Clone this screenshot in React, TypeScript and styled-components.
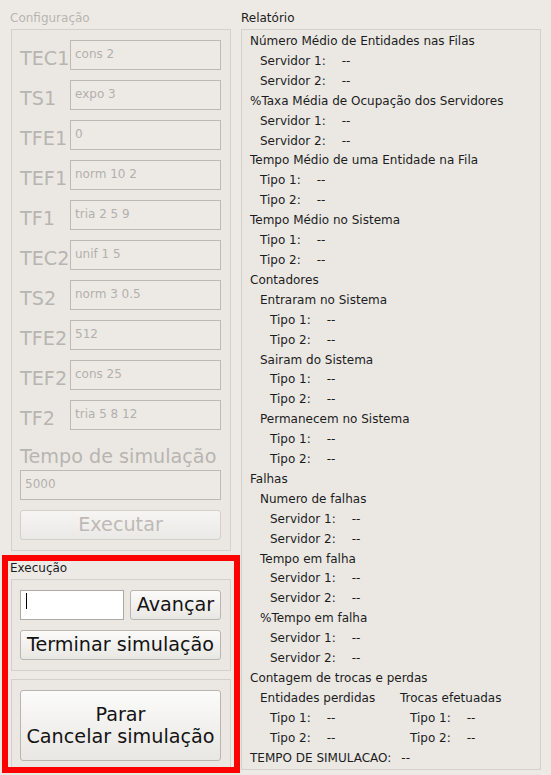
import React from "react";
import styled, { createGlobalStyle } from "styled-components";

const GlobalStyle = createGlobalStyle`
  html, body {
    margin: 0;
    padding: 0;
    background: #edeae6;
    font-family: "DejaVu Sans", "Liberation Sans", sans-serif;
  }
`;

const Page = styled.div`
  display: flex;
  align-items: flex-start;
  width: 551px;
  height: 775px;
  background: #edeae6;
  overflow: hidden;
`;

const LeftCol = styled.div`
  display: flex;
  flex-direction: column;
  width: 240px;
`;

const RightCol = styled.div`
  display: flex;
  flex-direction: column;
  padding: 11px 0 0 1px;
`;

const GroupTitle = styled.div<{ $disabled?: boolean }>`
  flex-shrink: 0;
  font-size: 12px;
  line-height: 14px;
  color: ${(p) => (p.$disabled ? "#b8b5b1" : "#1c1c1c")};
`;

const Frame = styled.div`
  box-sizing: border-box;
  flex-shrink: 0;
  border: 1px solid #d4d1cc;
  background: #ebe8e4;
`;

const ConfigSection = styled.div`
  display: flex;
  flex-direction: column;
  padding: 11px 0 0 10px;
`;

const ConfigFrame = styled(Frame)`
  display: flex;
  flex-direction: column;
  gap: 10px;
  margin: 4px 0 0 1px;
  width: 220px;
  height: 522px;
  padding: 10px 8px 0 8px;
`;

const ParamGrid = styled.div`
  display: grid;
  grid-template-columns: 50px 151px;
  grid-auto-rows: 30px;
  row-gap: 10px;
`;

const BigLabel = styled.div`
  font-size: 19.2px;
  line-height: 37px;
  height: 30px;
  color: #b8b5b1;
  white-space: nowrap;
`;

const SimLabel = styled(BigLabel)`
  line-height: 34px;
`;

const Field = styled.input`
  box-sizing: border-box;
  width: ${(p) => p.width ?? 151}px;
  height: 30px;
  margin: 0;
  padding: 6px 4px 8px 4px;
  border: 1px solid #bdbab6;
  border-radius: 0;
  background: #edeae6;
  color: #b3b0ac;
  font-family: "DejaVu Sans", "Liberation Sans", sans-serif;
  font-size: 12px;
  line-height: 14px;
  outline: none;
`;

const Button = styled.button<{ $disabled?: boolean; $w?: number; $h?: number }>`
  box-sizing: border-box;
  flex-shrink: 0;
  width: ${(p) => p.$w ?? 201}px;
  height: ${(p) => p.$h ?? 30}px;
  margin: 0;
  padding: 0;
  border: 1px solid ${(p) => (p.$disabled ? "#d3d0cb" : "#b9b6b1")};
  border-radius: 3px;
  background: ${(p) =>
    p.$disabled
      ? "linear-gradient(#f6f5f3, #ebe9e6)"
      : "linear-gradient(#fbfbfa, #e9e7e3)"};
  color: ${(p) => (p.$disabled ? "#bdbab6" : "#141414")};
  font-family: "DejaVu Sans", "Liberation Sans", sans-serif;
  font-size: 19.2px;
  line-height: 22px;
  text-align: center;
  white-space: nowrap;
`;

const ExecBox = styled.div`
  box-sizing: border-box;
  display: flex;
  flex-direction: column;
  margin: 4px 0 0 2px;
  width: 238px;
  height: 218px;
  border: 6px solid #ff0000;
  padding-left: 2px;
  overflow: hidden;
`;

const ExecFrame = styled(Frame)<{ $h: number }>`
  display: flex;
  flex-direction: column;
  gap: 10px;
  width: 220px;
  height: ${(p) => p.$h}px;
  margin: 4px 0 0 1px;
  padding: 10px 8px 0 8px;
`;

const ExecFrameNext = styled(ExecFrame)`
  margin-top: 8px;
`;

const EntryRow = styled.div`
  display: flex;
  gap: 6px;
`;

const Entry = styled.div`
  box-sizing: border-box;
  display: flex;
  align-items: flex-start;
  width: 104px;
  height: 30px;
  padding: 2px 0 0 5px;
  border: 1px solid #aeaba6;
  background: #ffffff;
`;

const Caret = styled.span`
  width: 1px;
  height: 16px;
  background: #000000;
`;

const ReportFrame = styled(Frame)`
  display: flex;
  flex-direction: column;
  margin-top: 4px;
  width: 300px;
  height: 741px;
  padding: 2px 0 0 8px;
`;

const Line = styled.div<{ $indent: number }>`
  display: flex;
  gap: 16px;
  height: 19.92px;
  padding-left: ${(p) => p.$indent * 10}px;
  font-size: 12px;
  line-height: 19.92px;
  color: #1c1c1c;
  white-space: nowrap;
`;

const Pair = styled.div`
  display: grid;
  grid-template-columns: 150px 140px;
`;

const FinalLine = styled(Line)`
  gap: 10px;
`;

type Item = { text: string; indent: number; value?: boolean };

const params = [
  ["TEC1", "cons 2"],
  ["TS1", "expo 3"],
  ["TFE1", "0"],
  ["TEF1", "norm 10 2"],
  ["TF1", "tria 2 5 9"],
  ["TEC2", "unif 1 5"],
  ["TS2", "norm 3 0.5"],
  ["TFE2", "512"],
  ["TEF2", "cons 25"],
  ["TF2", "tria 5 8 12"],
];

const srv = (indent: number): Item[] => [
  { text: "Servidor 1:", indent, value: true },
  { text: "Servidor 2:", indent, value: true },
];
const tipo = (indent: number): Item[] => [
  { text: "Tipo 1:", indent, value: true },
  { text: "Tipo 2:", indent, value: true },
];

const report: Item[] = [
  { text: "Número Médio de Entidades nas Filas", indent: 0 },
  ...srv(1),
  { text: "%Taxa Média de Ocupação dos Servidores", indent: 0 },
  ...srv(1),
  { text: "Tempo Médio de uma Entidade na Fila", indent: 0 },
  ...tipo(1),
  { text: "Tempo Médio no Sistema", indent: 0 },
  ...tipo(1),
  { text: "Contadores", indent: 0 },
  { text: "Entraram no Sistema", indent: 1 },
  ...tipo(2),
  { text: "Sairam do Sistema", indent: 1 },
  ...tipo(2),
  { text: "Permanecem no Sistema", indent: 1 },
  ...tipo(2),
  { text: "Falhas", indent: 0 },
  { text: "Numero de falhas", indent: 1 },
  ...srv(2),
  { text: "Tempo em falha", indent: 1 },
  ...srv(2),
  { text: "%Tempo em falha", indent: 1 },
  ...srv(2),
  { text: "Contagem de trocas e perdas", indent: 0 },
];

function ReportLine({ item }: { item: Item }) {
  return (
    <Line $indent={item.indent}>
      <span>{item.text}</span>
      {item.value && <span>--</span>}
    </Line>
  );
}

export default function App() {
  return (
    <Page>
      <GlobalStyle />
      <LeftCol>
        <ConfigSection>
          <GroupTitle $disabled>Configuração</GroupTitle>
          <ConfigFrame>
            <ParamGrid>
              {params.map(([name, value]) => (
                <React.Fragment key={name}>
                  <BigLabel>{name}</BigLabel>
                  <Field readOnly value={value} />
                </React.Fragment>
              ))}
            </ParamGrid>
            <div>
              <SimLabel>Tempo de simulação</SimLabel>
              <Field readOnly value="5000" width={201} />
            </div>
            <Button $disabled>Executar</Button>
          </ConfigFrame>
        </ConfigSection>
        <ExecBox>
          <GroupTitle>Execução</GroupTitle>
          <ExecFrame $h={92}>
            <EntryRow>
              <Entry>
                <Caret />
              </Entry>
              <Button $w={91}>Avançar</Button>
            </EntryRow>
            <Button>Terminar simulação</Button>
          </ExecFrame>
          <ExecFrameNext $h={100}>
            <Button $h={71}>
              Parar
              <br />
              Cancelar simulação
            </Button>
          </ExecFrameNext>
        </ExecBox>
      </LeftCol>
      <RightCol>
        <GroupTitle>Relatório</GroupTitle>
        <ReportFrame>
          {report.map((item, i) => (
            <ReportLine key={i} item={item} />
          ))}
          <Pair>
            <Line $indent={1}>Entidades perdidas</Line>
            <Line $indent={0}>Trocas efetuadas</Line>
            <ReportLine item={{ text: "Tipo 1:", indent: 2, value: true }} />
            <ReportLine item={{ text: "Tipo 1:", indent: 1, value: true }} />
            <ReportLine item={{ text: "Tipo 2:", indent: 2, value: true }} />
            <ReportLine item={{ text: "Tipo 2:", indent: 1, value: true }} />
          </Pair>
          <FinalLine $indent={0}>
            <span>TEMPO DE SIMULACAO:</span>
            <span>--</span>
          </FinalLine>
        </ReportFrame>
      </RightCol>
    </Page>
  );
}
